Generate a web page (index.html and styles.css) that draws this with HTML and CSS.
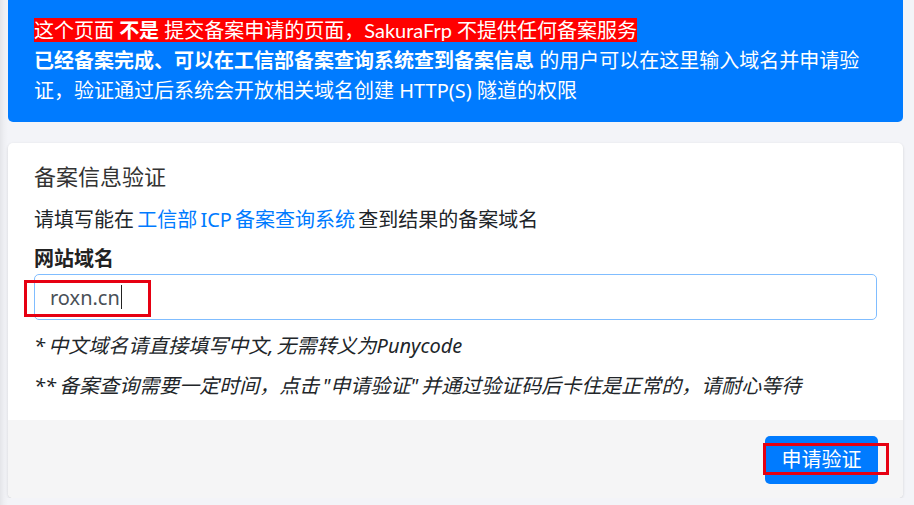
FILE: index.html
```html
<!DOCTYPE html>
<html lang="zh-CN">
<head>
<meta charset="utf-8">
<title>备案信息验证</title>
<link rel="stylesheet" href="styles.css">
</head>
<body>
<div class="page">
  <div class="alert">
    <div class="alert-line"><span class="mark">这个页面 <b>不是</b> 提交备案申请的页面，SakuraFrp 不提供任何备案服务</span></div>
    <div class="alert-line"><b>已经备案完成、可以在工信部备案查询系统查到备案信息</b> 的用户可以在这里输入域名并申请验证，验证通过后系统会开放相关域名创建 HTTP(S) 隧道的权限</div>
  </div>

  <div class="card">
    <div class="card-body">
      <div class="card-title">备案信息验证</div>
      <p class="desc">请填写能在 <a class="link" href="#">工信部 ICP 备案查询系统</a> 查到结果的备案域名</p>
      <div class="label">网站域名</div>
      <div class="input-wrap">
        <div class="input"><span>roxn.cn</span><span class="caret"></span></div>
        <div class="annot annot-input"></div>
      </div>
      <p class="note">* 中文域名请直接填写中文, 无需转义为Punycode</p>
      <p class="note">** 备案查询需要一定时间，点击 "申请验证" 并通过验证码后卡住是正常的，请耐心等待</p>
    </div>
    <div class="card-footer">
      <div class="btn-wrap">
        <button class="btn">申请验证</button>
        <div class="annot annot-btn"></div>
      </div>
    </div>
  </div>
</div>
</body>
</html>
```

FILE: styles.css
```css
html, body {
  margin: 0;
  padding: 0;
}
body {
  background: #f3f4f8;
  background-image: linear-gradient(to right, #e4e5e9 0px, #eeeff3 4px, #f3f4f8 8px);
  font-family: "Noto Sans", "Noto Sans CJK SC", sans-serif;
  font-size: 20px;
  color: #212529;
  overflow: hidden;
}
.page {
  padding: 0 11px 0 8px;
}
.alert {
  margin-top: -1px;
  background: #007bff;
  color: #fff;
  border-radius: 0 0 5px 5px;
  padding: 16px 36px 16px 26px;
  line-height: 30px;
}
.alert b {
  font-weight: 700;
}
.mark {
  background: #ff0000;
  font-family: Lato, "Noto Sans CJK SC", sans-serif;
}
.card {
  margin-top: 21px;
  background: #fff;
  border-radius: 5px;
  box-shadow: 0 1px 3px rgba(0, 0, 0, 0.14);
  overflow: hidden;
}
.card-body {
  padding: 20px 26px 19px 26px;
}
.card-title {
  font-size: 22px;
  line-height: 26px;
  color: #333;
  margin-bottom: 16px;
}
.desc {
  margin: 0 0 9px 0;
  line-height: 30px;
  color: #212529;
  word-spacing: -2px;
}
.link {
  color: #007bff;
  text-decoration: none;
}
.label {
  font-weight: 700;
  line-height: 30px;
  color: #222;
}
.input-wrap {
  position: relative;
}
.input {
  height: 46px;
  box-sizing: border-box;
  border: 1px solid #80bdff;
  border-radius: 5px;
  padding: 0 15px;
  display: flex;
  align-items: center;
  color: #495057;
  font-size: 20px;
}
.caret {
  display: inline-block;
  width: 1px;
  height: 24px;
  background: #222;
  margin-left: 1px;
}
.note {
  margin: 11px 0 0 0;
  line-height: 30px;
  font-style: italic;
  color: #212529;
  word-spacing: -2px;
}
.note + .note {
  margin-top: 10px;
}
.card-footer {
  background: #f5f5f6;
  padding: 16px 25px 14px 26px;
  display: flex;
  justify-content: flex-end;
}
.btn-wrap {
  position: relative;
}
.btn {
  display: block;
  height: 48px;
  width: 113px;
  padding: 0;
  border: 0;
  border-radius: 5px;
  background: #007bff;
  color: #fff;
  font-family: "Noto Sans", "Noto Sans CJK SC", sans-serif;
  font-size: 20px;
  line-height: 48px;
}
.annot {
  position: absolute;
  border: 3px solid #e60012;
  box-sizing: border-box;
}
.annot-input {
  left: -10px;
  top: 6px;
  width: 127px;
  height: 37px;
}
.annot-btn {
  left: -2px;
  top: 7px;
  width: 126px;
  height: 32px;
}
```
